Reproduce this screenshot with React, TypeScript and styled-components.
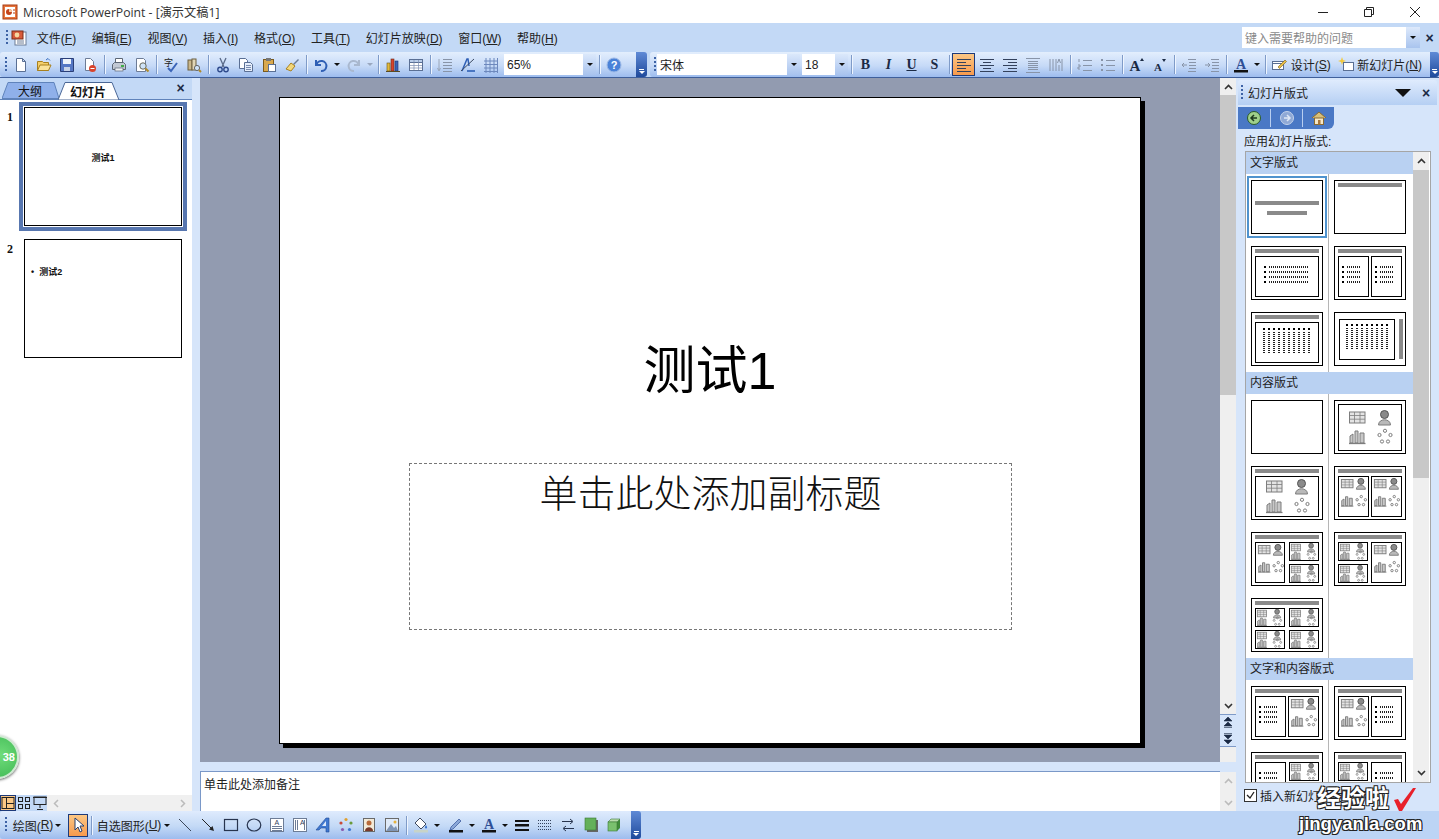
import React from "react";
import styled, { createGlobalStyle } from "styled-components";

const UI_FONT = `"Liberation Sans", "Noto Sans CJK SC", sans-serif`;

const GlobalStyle = createGlobalStyle`
  html, body { margin: 0; padding: 0; height: 100%; overflow: hidden; background: #c3d9f6; }
  * { box-sizing: border-box; }
  #root { height: 100%; }
`;

const Window = styled.div`
  position: relative;
  width: 1439px;
  height: 839px;
  display: flex;
  flex-direction: column;
  overflow: hidden;
  font: 12px ${UI_FONT};
  color: #111;
`;

const TitleBar = styled.div`
  height: 23px;
  flex: none;
  background: #fff;
  display: flex;
  align-items: center;
  padding-left: 2px;
  font: 12.2px "Open Sans", "Noto Sans CJK SC", sans-serif;
  color: #333;
`;
const TitleText = styled.span`
  margin-left: 5px;
`;
const WindowButtons = styled.div`
  margin-left: auto;
  margin-right: 1px;
  display: flex;
`;
const WindowButton = styled.div`
  width: 45px;
  height: 23px;
  display: flex;
  align-items: center;
  justify-content: center;
  margin-right: 1px;
`;

const MenuBar = styled.div`
  height: 29px;
  flex: none;
  background: #c3d9f6;
  display: flex;
  align-items: center;
  padding-left: 6px;
`;
const DocGrip = styled.div`
  width: 2px;
  height: 16px;
  flex: none;
  background: repeating-linear-gradient(to bottom, #3d62a5 0 2px, transparent 2px 4px);
`;
const MenuIcon = styled.div`
  width: 21px;
  display: flex;
  justify-content: center;
`;
const MenuItem = styled.span`
  padding: 0 7.8px;
  white-space: nowrap;
  color: #222;
`;
const HelpBox = styled.div`
  margin-left: auto;
  width: 178px;
  height: 21px;
  background: #fff;
  display: flex;
  align-items: center;
  padding-left: 3px;
  color: #8a8a8a;
`;
const HelpArrow = styled.div`
  margin-left: auto;
  width: 14px;
  height: 100%;
  background: linear-gradient(#dde9fb, #a9c4ee);
  display: flex;
  align-items: center;
  justify-content: center;
`;
const CloseGlyph = styled.span<{ $w?: number }>`
  width: ${(p) => p.$w ?? 19}px;
  text-align: center;
  font: bold 14px "Liberation Sans", sans-serif;
  color: #1b2a44;
`;

const ToolRow = styled.div`
  height: 26px;
  flex: none;
  display: flex;
  background: #c3d9f6;
  border-bottom: 1px solid #3f5f9a;
`;
const Strip = styled.div<{ $w: number; $pad?: number }>`
  width: ${(p) => p.$w}px;
  flex: none;
  height: 25px;
  display: flex;
  align-items: center;
  padding-left: ${(p) => p.$pad ?? 5}px;
  background: linear-gradient(#e3eefd, #c6daf7 55%, #9dbcee);
  border-radius: 3px 0 0 3px;
`;
const GripSlot = styled.div<{ $w?: number }>`
  width: ${(p) => p.$w ?? 5}px;
  flex: none;
`;
const Btn = styled.div<{ $w?: number; $active?: boolean }>`
  width: ${(p) => p.$w ?? 23}px;
  height: 23px;
  flex: none;
  display: flex;
  align-items: center;
  justify-content: center;
  white-space: nowrap;
  color: #222;
  ${(p) =>
    p.$active &&
    `background: linear-gradient(#fbc785, #f79a4d); border: 1px solid #1d3a7a;`}
`;
const FmtLetter = styled.span<{ $italic?: boolean; $under?: boolean }>`
  font: bold 14px "Liberation Serif", serif;
  font-style: ${(p) => (p.$italic ? "italic" : "normal")};
  text-decoration: ${(p) => (p.$under ? "underline" : "none")};
  color: #1b2a44;
`;
const Sep = styled.div`
  width: 6px;
  height: 19px;
  flex: none;
  display: flex;
  justify-content: center;
  &::before {
    content: "";
    width: 1px;
    background: #7f9bc8;
    box-shadow: 1px 0 0 #eef5ff;
  }
`;
const Mini = styled.span<{ $color?: string }>`
  width: 0;
  height: 0;
  border-left: 3px solid transparent;
  border-right: 3px solid transparent;
  border-top: 3px solid ${(p) => p.$color ?? "#111"};
`;
const ArrowBtn = styled.div`
  width: 10px;
  height: 23px;
  flex: none;
  display: flex;
  align-items: center;
  justify-content: center;
`;
const Combo = styled.div<{ $w: number; $ml?: number }>`
  width: ${(p) => p.$w}px;
  margin-left: ${(p) => p.$ml ?? 0}px;
  height: 21px;
  flex: none;
  background: #fff;
  display: flex;
  align-items: center;
  padding-left: 3px;
  color: #222;
`;
const ComboArrow = styled.div`
  margin-left: auto;
  width: 13px;
  height: 100%;
  background: linear-gradient(#dbe8fb, #a8c3ee);
  display: flex;
  align-items: center;
  justify-content: center;
`;
const Overflow = styled.div<{ $w?: number }>`
  width: ${(p) => p.$w ?? 11}px;
  height: 25px;
  flex: none;
  background: linear-gradient(#5f8ad6, #1f4a9c);
  border-radius: 0 3px 3px 0;
  display: flex;
  flex-direction: column;
  align-items: center;
  justify-content: flex-end;
  padding-bottom: 3px;
  gap: 1px;
  &::before {
    content: "";
    width: 5px;
    height: 1px;
    background: #fff;
  }
  &::after {
    content: "";
    width: 0;
    height: 0;
    border-left: 3px solid transparent;
    border-right: 3px solid transparent;
    border-top: 3px solid #fff;
  }
`;
const ToolGap = styled.div<{ $w: number }>`
  width: ${(p) => p.$w}px;
  flex: none;
`;

const Workspace = styled.div`
  height: 733px;
  flex: none;
  display: flex;
  background: #d6e5fa;
`;

const LeftPanel = styled.div`
  width: 192px;
  flex: none;
  display: flex;
  flex-direction: column;
  background: #fff;
`;
const TabStrip = styled.div`
  height: 22px;
  flex: none;
  display: flex;
  align-items: flex-end;
  padding-left: 2px;
  background: #c3d9f6;
  border-bottom: 1px solid #5f83bb;
  position: relative;
`;
const Tab = styled.div<{ $w: number; $active?: boolean }>`
  position: relative;
  width: ${(p) => p.$w}px;
  height: ${(p) => (p.$active ? 18 : 17)}px;
  margin-bottom: ${(p) => (p.$active ? -1 : 0)}px;
  display: flex;
  align-items: center;
  justify-content: center;
  font-weight: ${(p) => (p.$active ? "bold" : "normal")};
  z-index: ${(p) => (p.$active ? 1 : 0)};
  & > span {
    position: relative;
  }
  & > svg {
    position: absolute;
    inset: 0;
  }
`;
const TabClose = styled(CloseGlyph)`
  position: absolute;
  right: 2px;
  top: 2px;
`;
const ThumbList = styled.div`
  flex: 1;
  padding: 2px 0 0 7px;
  display: flex;
  flex-direction: column;
  gap: 3px;
`;
const ThumbRow = styled.div`
  display: flex;
`;
const ThumbNumber = styled.div`
  width: 12px;
  padding-top: 8px;
  font: bold 12px "Liberation Serif", serif;
`;
const ThumbFrame = styled.div<{ $selected?: boolean }>`
  width: 168px;
  height: 129px;
  padding: 1px;
  border: 4px solid ${(p) => (p.$selected ? "#5877b0" : "transparent")};
`;
const Thumb = styled.div<{ $bullet?: boolean }>`
  width: 158px;
  height: 119px;
  border: 1px solid #000;
  background: #fff;
  display: flex;
  font-size: 9px;
  font-weight: bold;
  ${(p) =>
    p.$bullet
      ? `padding: 25px 0 0 6px;`
      : `align-items: flex-start; justify-content: center; padding-top: 43px;`}
`;
const ViewBar = styled.div`
  height: 16px;
  flex: none;
  display: flex;
  background: #f0f0f0;
`;
const ViewButtons = styled.div`
  width: 47px;
  display: flex;
  background: #c3d9f6;
`;
const ViewButton = styled.div<{ $active?: boolean }>`
  width: 16px;
  height: 16px;
  display: flex;
  align-items: center;
  justify-content: center;
  ${(p) => p.$active && `background: #fbc785; outline: 1px solid #1d3a7a; outline-offset: -1px;`}
`;
const HScroll = styled.div`
  flex: 1;
  display: flex;
  align-items: center;
  justify-content: space-between;
  padding: 0 6px 0 6px;
`;

const Splitter = styled.div`
  width: 8px;
  flex: none;
  background: #d6e5fa;
`;

const CenterColumn = styled.div`
  width: 1036px;
  flex: none;
  display: flex;
  flex-direction: column;
`;
const TopRow = styled.div`
  height: 684px;
  flex: none;
  display: flex;
`;
const Canvas = styled.div`
  width: 1020px;
  flex: none;
  background: #929bb0;
  padding: 19px 0 0 79px;
`;
const Slide = styled.div`
  width: 862px;
  height: 647px;
  background: #fff;
  border: 1px solid #000;
  box-shadow: 4px 4px 0 #000;
  padding-top: 243px;
`;
const SlideTitle = styled.div`
  height: 60px;
  line-height: 60px;
  text-align: center;
  font-size: 52px;
  color: #000;
`;
const SubtitleBox = styled.div`
  margin: 62px 0 0 129px;
  width: 603px;
  height: 167px;
  border: 1px dashed #777;
  padding-top: 2px;
  text-align: center;
  font-size: 38px;
  line-height: 56px;
  color: #111;
  font-weight: 300;
`;
const VScroll = styled.div`
  width: 16px;
  flex: none;
  display: flex;
  flex-direction: column;
  background: #efefef;
`;
const ScrollBtn = styled.div<{ $h?: number }>`
  height: ${(p) => p.$h ?? 17}px;
  flex: none;
  display: flex;
  align-items: center;
  justify-content: center;
`;
const ScrollThumb = styled.div<{ $h: number }>`
  height: ${(p) => p.$h}px;
  flex: none;
  background: #c8c8c8;
`;
const ScrollFill = styled.div`
  flex: 1;
`;
const PageButtons = styled.div`
  height: 33px;
  flex: none;
  margin-bottom: 15px;
  border-top: 1px solid #7f9bc8;
  border-bottom: 1px solid #7f9bc8;
  display: flex;
  flex-direction: column;
  align-items: center;
  justify-content: space-around;
  background: #d6e5fa;
`;
const Strip9 = styled.div`
  height: 9px;
  flex: none;
`;
const NotesRow = styled.div`
  flex: 1;
  display: flex;
`;
const Notes = styled.div`
  width: 1020px;
  flex: none;
  background: #fff;
  border-top: 1px solid #7a98c8;
  border-left: 1px solid #7a98c8;
  padding: 3px 3px;
  color: #222;
`;
const NotesScroll = styled(VScroll)`
  justify-content: space-between;
  border-top: 1px solid #d6e5fa;
`;

const TaskPane = styled.div`
  width: 203px;
  flex: none;
  padding: 2px 2px 0;
  display: flex;
  flex-direction: column;
`;
const PaneHead = styled.div`
  height: 25px;
  flex: none;
  display: flex;
  align-items: center;
  padding-left: 3px;
  background: linear-gradient(#dfebfd, #b5cff3);
  border-radius: 3px 3px 0 0;
  color: #222;
`;
const PaneTitle = styled.span`
  margin-left: 5px;
`;
const PaneMenu = styled.span`
  margin-left: auto;
  width: 0;
  height: 0;
  border-left: 8px solid transparent;
  border-right: 8px solid transparent;
  border-top: 8px solid #111;
  margin-right: 4px;
`;
const PaneNav = styled.div`
  width: 96px;
  height: 22px;
  margin-top: 2px;
  flex: none;
  background: #4a78c5;
  border-radius: 0 0 6px 0;
  display: flex;
  align-items: center;
`;
const NavItem = styled.div`
  width: 32px;
  height: 18px;
  display: flex;
  align-items: center;
  justify-content: center;
  & + & {
    border-left: 1px solid #b8cef0;
  }
`;
const PaneLabel = styled.div`
  margin: 5px 0 0 6px;
  height: 17px;
  line-height: 17px;
  color: #222;
`;
const ListBox = styled.div`
  margin: 0 0 0 7px;
  width: 186px;
  height: 632px;
  flex: none;
  display: flex;
  border: 1px solid #a5a5a5;
  background: #fff;
`;
const ListContent = styled.div`
  width: 167px;
  flex: none;
  overflow: hidden;
`;
const SectionHead = styled.div`
  height: 22px;
  line-height: 22px;
  padding-left: 4px;
  background: #b9d1f2;
  color: #222;
`;
const LayoutGrid = styled.div`
  display: grid;
  grid-template-columns: 83px 83px;
  row-gap: 12px;
  padding: 6px 0;
  background: linear-gradient(#b5b5b5, #b5b5b5) 82px 0 / 1px 100% no-repeat;
`;
const LayoutCell = styled.div<{ $selected?: boolean }>`
  width: 72px;
  height: 54px;
  margin-left: 5px;
  ${(p) => p.$selected && `outline: 2px solid #4f93ce; outline-offset: 2px;`}
  & > svg {
    display: block;
  }
`;
const PaneFoot = styled.div`
  height: 27px;
  display: flex;
  align-items: center;
  padding: 0 0 3px 6px;
  gap: 3px;
  color: #222;
  white-space: nowrap;
`;
const CheckBox = styled.div`
  width: 13px;
  height: 13px;
  border: 1px solid #333;
  background: #fff;
  display: flex;
  align-items: center;
  justify-content: center;
`;

const DrawBar = styled.div`
  flex: 1;
  display: flex;
  background: #bcd4f5;
`;
const DrawStrip = styled(Strip)`
  height: 28px;
  background: linear-gradient(#dfebfd, #c3d9f6 55%, #9dbcee);
`;
const DrawOverflow = styled(Overflow)`
  height: 28px;
`;

const Badge = styled.div`
  position: absolute;
  left: -25px;
  top: 735px;
  width: 44px;
  height: 44px;
  border-radius: 50%;
  background: radial-gradient(circle at 60% 45%, #6fdc7a, #37b24d);
  border: 2px solid #cfe9d2;
  box-shadow: 0 1px 3px #555;
  color: #fff;
  font-size: 11px;
  font-weight: bold;
  line-height: 40px;
  text-align: right;
  padding-right: 2px;
`;
const Watermark = styled.div`
  position: absolute;
  left: 1299px;
  top: 786px;
  width: 130px;
  pointer-events: none;
  font-weight: bold;
  color: #fff;
  text-shadow: 1px 1px 0 #222, -1px -1px 0 #222, 1px -1px 0 #222, -1px 1px 0 #222;
`;
const MarkTop = styled.div`
  font-size: 24px;
  line-height: 26px;
  padding-left: 18px;
  display: flex;
  align-items: center;
  gap: 3px;
`;
const MarkBottom = styled.div`
  font-size: 18.5px;
  line-height: 24px;
`;

/* ---------- icons ---------- */

const S = ({ children, size = 16 }: { children: React.ReactNode; size?: number }) => (
  <svg width={size} height={size} viewBox="0 0 16 16">
    {children}
  </svg>
);

const lines = (ys: number[], x1: number, x2: number, c = "#33415c") =>
  ys.map((y) => <path key={y} d={`M${x1} ${y + 0.5}H${x2}`} stroke={c} />);

const ICONS: Record<string, React.ReactNode> = {
  pp: (
    <>
      <rect x="1" y="1" width="14" height="14" fill="#e8743b" stroke="#a83c14" />
      <rect x="3" y="3" width="10" height="10" fill="#fff" />
      <circle cx="7" cy="8" r="3" fill="#c4441c" />
      <path d="M7 8V5a3 3 0 0 1 3 3z" fill="#f7c8a0" />
      <path d="M11 6h2M11 9h2" stroke="#a83c14" />
    </>
  ),
  docmenu: (
    <>
      <rect x="4" y="2" width="11" height="13" fill="#fff" stroke="#6d7c96" />
      <rect x="1" y="1" width="11" height="8" fill="#d75a3a" stroke="#7c2c18" />
      <circle cx="6" cy="5" r="2.4" fill="#f7d7a0" />
      <path d="M6 11h7M6 13h7" stroke="#6d7c96" />
    </>
  ),
  newdoc: <path d="M3.5 1.5h6l3 3v10h-9z M9.5 1.5v3h3" fill="#fff" stroke="#5a6f94" />,
  open: (
    <>
      <path d="M1.5 13.5v-9h5l1 1h5v8z" fill="#f5cf6a" stroke="#a8801f" />
      <path d="M1.5 13.5l2.5-5.5h11l-2.5 5.5z" fill="#fbe39a" stroke="#a8801f" />
      <path d="M10 3l2-1.5 2 2" fill="none" stroke="#3a6fc0" />
    </>
  ),
  save: (
    <>
      <path d="M1.5 1.5h13v13h-13z" fill="#5577c4" stroke="#2b3f78" />
      <rect x="4" y="2" width="8" height="5" fill="#eef3fb" />
      <rect x="5" y="10" width="6" height="4" fill="#c8d3e8" />
    </>
  ),
  perm: (
    <>
      <path d="M3.5 1.5h5l3 3v9h-8z" fill="#fff" stroke="#6d7c96" />
      <circle cx="10.5" cy="11.5" r="3.5" fill="#d8432c" />
      <path d="M8.5 11.5h4" stroke="#fff" />
    </>
  ),
  print: (
    <>
      <path d="M4.5 1.5h7v5h-7z" fill="#fff" stroke="#5c6675" />
      <path d="M1.5 7.5l2-2h9l2 2v5h-13z" fill="#c2c9d4" stroke="#5c6675" />
      <rect x="4" y="11" width="8" height="3" fill="#eef1f5" stroke="#5c6675" strokeWidth=".7" />
      <rect x="10" y="8" width="3" height="2" fill="#3fae4a" />
    </>
  ),
  preview: (
    <>
      <path d="M2.5 1.5h7l2 2v11h-9z" fill="#fff" stroke="#6d7c96" />
      <circle cx="9" cy="9" r="3.2" fill="#cfe3f7" stroke="#6a6a5a" />
      <path d="M11.5 11.5l3 3" stroke="#b08a2a" strokeWidth="2" />
    </>
  ),
  spell: (
    <>
      <text x="1" y="9" fontSize="9" fontFamily="Noto Sans CJK SC" fill="#222">字</text>
      <path d="M5 11l3 3 6-8" fill="none" stroke="#3a64b8" strokeWidth="2" />
    </>
  ),
  research: (
    <>
      <rect x="2" y="3" width="4" height="10" fill="#c9b68a" stroke="#6d5f3e" />
      <rect x="6" y="2" width="4" height="11" fill="#e0d5b5" stroke="#6d5f3e" />
      <circle cx="11" cy="11" r="2.6" fill="#cfe3f7" stroke="#666" />
      <path d="M13 13l2 2" stroke="#b08a2a" strokeWidth="2" />
    </>
  ),
  cut: (
    <>
      <path d="M5 1l4 9M11 1L7 10" stroke="#5a6a88" strokeWidth="1.3" />
      <circle cx="5" cy="12.5" r="2.2" fill="none" stroke="#2e4a8c" strokeWidth="1.4" />
      <circle cx="11" cy="12.5" r="2.2" fill="none" stroke="#2e4a8c" strokeWidth="1.4" />
    </>
  ),
  copy: (
    <>
      <path d="M1.5 1.5h6l2 2v8h-8z" fill="#fff" stroke="#5a6f94" />
      <path d="M6.5 5.5h6l2 2v7h-8z" fill="#e6eefb" stroke="#5a6f94" />
      {lines([8, 10, 12], 8, 13, "#7b8db0")}
    </>
  ),
  paste: (
    <>
      <rect x="2.5" y="2.5" width="10" height="12" fill="#d9a94f" stroke="#7a5a1c" />
      <rect x="5" y="1" width="5" height="3" fill="#777" />
      <rect x="7.5" y="7.5" width="7" height="7" fill="#fff" stroke="#5a6f94" />
    </>
  ),
  painter: (
    <>
      <path d="M9 7l5-5 1 1-5 5z" fill="#6d7c96" />
      <path d="M2 12l5-6 4 3-4 5z" fill="#f3d77a" stroke="#a8801f" />
    </>
  ),
  undo: <path d="M3 3v5h5M3.5 8A5 5 0 1 1 8 14" fill="none" stroke="#2f5fb5" strokeWidth="2" />,
  redo: <path d="M13 3v5H8M12.5 8A5 5 0 1 0 8 14" fill="none" stroke="#a9b8cf" strokeWidth="2" />,
  chart: (
    <>
      <rect x="2" y="6" width="3" height="8" fill="#e2b93b" stroke="#6a5518" strokeWidth=".6" />
      <rect x="6" y="2" width="3" height="12" fill="#d8432c" stroke="#6a2a18" strokeWidth=".6" />
      <rect x="10" y="4" width="3" height="10" fill="#3a64b8" stroke="#1e3470" strokeWidth=".6" />
      <path d="M1 14.5h14" stroke="#5a4a20" />
    </>
  ),
  table: (
    <>
      <rect x="1.5" y="2.5" width="13" height="11" fill="#fff" stroke="#5a6f94" />
      <rect x="1.5" y="2.5" width="13" height="3" fill="#b9cdea" stroke="#5a6f94" />
      <path d="M6 3v10M10.5 3v10M2 8.5h12M2 11h12" stroke="#7b8db0" strokeWidth=".7" />
    </>
  ),
  expand: (
    <>
      <path d="M2 2v11M0.5 11L2 14l1.5-3" fill="none" stroke="#9aa6b8" />
      {lines([2, 5, 8, 11, 14], 6, 15, "#8894a8")}
    </>
  ),
  format: (
    <>
      <path d="M2 14L7 2h1l1 7" fill="none" stroke="#2f5fb5" strokeWidth="1.5" />
      <path d="M1 14L14 2" stroke="#3c4a62" />
      <path d="M7 14h8" stroke="#2f5fb5" strokeWidth="1.6" />
    </>
  ),
  grid: <path d="M1 4h14M1 7.5h14M1 11h14M1 14.5h14M3 1v15M7 1v15M11 1v15M14.5 1v15" stroke="#6d88bd" fill="none" />,
  help: (
    <>
      <circle cx="8" cy="8" r="7" fill="#4a82d8" stroke="#9db9e6" />
      <text x="8" y="12" fontSize="11" fontWeight="bold" textAnchor="middle" fill="#fff" fontFamily="Liberation Sans">?</text>
    </>
  ),
  alignL: <>{lines([2, 8, 14], 1, 15)}{lines([5, 11], 1, 10)}</>,
  alignC: <>{lines([2, 8, 14], 1, 15)}{lines([5, 11], 4, 12)}</>,
  alignR: <>{lines([2, 8, 14], 1, 15)}{lines([5, 11], 6, 15)}</>,
  justify: (
    <>
      {lines([1, 15], 1, 15, "#8894a8")}
      {lines([4, 6, 8, 10, 12], 3, 13, "#8894a8")}
    </>
  ),
  distribute: (
    <>
      <path d="M2 2v12M5 2v12M8 2v12M14 2v12M11 8v6" stroke="#8894a8" />
      <path d="M9.5 6l1.5-4 1.5 4" fill="none" stroke="#8894a8" />
    </>
  ),
  number: (
    <>
      <path d="M2 2v3M1 8h2v2H1v2h2" fill="none" stroke="#8894a8" />
      {lines([3, 8, 13], 6, 15, "#8894a8")}
    </>
  ),
  bullets: (
    <>
      <path d="M2 2v2M2 7v2M2 12v2" stroke="#8894a8" strokeWidth="2" />
      {lines([3, 8, 13], 6, 15, "#8894a8")}
    </>
  ),
  growFont: (
    <>
      <text x="6" y="14" fontSize="15" fontWeight="bold" textAnchor="middle" fontFamily="Liberation Serif" fill="#1b2a44">A</text>
      <path d="M11 4l2-3 2 3z" fill="#1b2a44" />
    </>
  ),
  shrinkFont: (
    <>
      <text x="6" y="14" fontSize="11" fontWeight="bold" textAnchor="middle" fontFamily="Liberation Serif" fill="#1b2a44">A</text>
      <path d="M10 2h4l-2 3z" fill="#1b2a44" />
    </>
  ),
  outdent: (
    <>
      {lines([2, 14], 7, 15, "#8894a8")}
      {lines([5, 8, 11], 8, 15, "#8894a8")}
      <path d="M1 8h5M3 6L1 8l2 2" fill="none" stroke="#8894a8" />
    </>
  ),
  indent: (
    <>
      {lines([2, 14], 7, 15, "#8894a8")}
      {lines([5, 8, 11], 8, 15, "#8894a8")}
      <path d="M1 8h5M4 6l2 2-2 2" fill="none" stroke="#8894a8" />
    </>
  ),
  fontColor: (
    <>
      <text x="8" y="11.5" fontSize="14" fontWeight="bold" textAnchor="middle" fontFamily="Liberation Serif" fill="#2f4f96">A</text>
      <rect x="1" y="13" width="14" height="2.5" fill="#111" />
    </>
  ),
  design: (
    <>
      <rect x="1.5" y="4.5" width="11" height="8" fill="#fff" stroke="#5a6f94" />
      <path d="M2 6.5h10" stroke="#5a6f94" />
      <path d="M7 10l7-7 1.5 1.5-7 7z" fill="#e8c048" stroke="#7a5a1c" strokeWidth=".6" />
    </>
  ),
  newslide: (
    <>
      <rect x="5.5" y="5.5" width="10" height="8" fill="#fff" stroke="#5a6f94" />
      <path d="M4 0l1 3 3 1-3 1-1 3-1-3-3-1 3-1z" fill="#f3c93c" />
    </>
  ),
  cursor: <path d="M5 1v12l3-3 2 5 2-1-2-5h4z" fill="#fff" stroke="#27406f" />,
  line: <path d="M2 2l12 12" stroke="#3a465a" />,
  arrowLine: (
    <>
      <path d="M2 2l9 9" stroke="#222" />
      <path d="M14 14l-5-1.5 3.5-3.5z" fill="#222" />
    </>
  ),
  rect: <rect x="1.5" y="2.5" width="13" height="11" fill="none" stroke="#27344e" strokeWidth="1.2" />,
  ellipse: <ellipse cx="8" cy="8" rx="6.8" ry="6" fill="none" stroke="#27344e" strokeWidth="1.2" />,
  textbox: (
    <>
      <rect x="1.5" y="1.5" width="13" height="13" fill="#fff" stroke="#6d7c96" />
      <text x="5.5" y="8" fontSize="7" fontFamily="Liberation Sans" fill="#33415c">A</text>
      {lines([9, 11, 13], 3, 13, "#6d7c96")}
    </>
  ),
  vtextbox: (
    <>
      <rect x="1.5" y="1.5" width="13" height="13" fill="#fff" stroke="#6d7c96" />
      <text x="8" y="8" fontSize="7" fontFamily="Liberation Sans" fill="#33415c">A</text>
      <path d="M3.5 3v10M5.5 3v10M12.5 3v10" stroke="#6d7c96" />
    </>
  ),
  wordart: (
    <>
      <path d="M1 13L11 1h3v14h-3v-4H6l-2 2z" fill="#3f78d0" stroke="#244a94" strokeWidth=".6" />
      <path d="M7 9l4-5v5z" fill="#dce8fa" />
    </>
  ),
  diagram: (
    <>
      <circle cx="8" cy="2.5" r="1.6" fill="#e0a030" />
      <circle cx="13" cy="6" r="1.6" fill="#6a9a3a" />
      <circle cx="11.5" cy="12.5" r="1.6" fill="#3f78d0" />
      <circle cx="4.5" cy="12.5" r="1.6" fill="#8a5ab0" />
      <circle cx="3" cy="6" r="1.6" fill="#c84a3a" />
    </>
  ),
  clipart: (
    <>
      <rect x="2.5" y="1.5" width="11" height="13" fill="#f2ead8" stroke="#6a6a6a" />
      <circle cx="8" cy="6" r="2.5" fill="#b86a3a" />
      <path d="M4 14c0-5 8-5 8 0z" fill="#7a3a2a" />
    </>
  ),
  picture: (
    <>
      <rect x="1.5" y="1.5" width="13" height="13" fill="#dfeaf8" stroke="#6a6a6a" />
      <path d="M2 14l5-7 3 4 2-2 2 5z" fill="#7f95b5" />
      <circle cx="11" cy="5" r="1.5" fill="#e6b23a" />
    </>
  ),
  fill: (
    <>
      <path d="M7 1l6 6-5 5-6-6z" fill="#fff" stroke="#3f4a60" />
      <path d="M13 8c1.5 2 1.5 3.5 0 3.5s-1.5-1.5 0-3.5z" fill="#3f78d0" />
      <rect x="1" y="13" width="14" height="2.5" fill="#c8d4c8" />
    </>
  ),
  lineColor: (
    <>
      <path d="M3 10L11 2l2 2-8 8-3 1z" fill="#8aa8d8" stroke="#2f4f96" strokeWidth=".7" />
      <rect x="1" y="13" width="14" height="2.5" fill="#111" />
    </>
  ),
  lineStyle: (
    <>
      <rect x="1" y="3" width="14" height="2" fill="#111" />
      <rect x="1" y="7" width="14" height="2.5" fill="#111" />
      <rect x="1" y="12" width="14" height="2" fill="#111" />
    </>
  ),
  dash: <path d="M1 3.5h14M1 6.5h14M1 9.5h14M1 12.5h14" stroke="#33415c" strokeDasharray="1 1" />,
  arrows: <path d="M2 4.5h10M10 2l3 2.5L10 7M14 11.500H4M6 9l-3 2.500L6 14" fill="none" stroke="#27344e" />,
  shadow: (
    <>
      <rect x="4" y="3" width="11" height="12" fill="#666" />
      <rect x="2" y="1" width="11" height="12" fill="#64b05a" stroke="#3a7a34" strokeWidth=".6" />
    </>
  ),
  threeD: (
    <>
      <path d="M2 5l3-3h9l-3 3z" fill="#b9dcae" stroke="#3a7a34" strokeWidth=".6" />
      <path d="M11 5l3-3v9l-3 3z" fill="#3f8a3a" />
      <rect x="2" y="5" width="9" height="9" fill="#7ac06e" stroke="#3a7a34" strokeWidth=".6" />
    </>
  ),
  navBack: (
    <>
      <circle cx="8" cy="8" r="6.5" fill="#9fd08a" stroke="#2a5a2a" />
      <path d="M11 8H6M8 5L5 8l3 3" fill="none" stroke="#1f3a1f" strokeWidth="1.5" />
    </>
  ),
  navForward: (
    <>
      <circle cx="8" cy="8" r="6.5" fill="#8fa9d6" stroke="#c4d3ec" />
      <path d="M5 8h5M8 5l3 3-3 3" fill="none" stroke="#dfe8f6" strokeWidth="1.5" />
    </>
  ),
  navHome: (
    <>
      <path d="M1 8l7-6 7 6" fill="#d8c07a" stroke="#8a6a30" />
      <rect x="3.5" y="8" width="9" height="6.5" fill="#f6e8c8" stroke="#8a6a30" />
      <rect x="7" y="10" width="2.5" height="4.5" fill="#a8763a" />
    </>
  ),
  viewNormal: (
    <>
      <rect x="2" y="2.5" width="12" height="11" fill="none" stroke="#222" />
      <path d="M6.5 3v10M7 8.5h7" stroke="#222" />
    </>
  ),
  viewSorter: (
    <>
      <rect x="2.5" y="2.5" width="4" height="4" fill="none" stroke="#222" />
      <rect x="9.5" y="2.5" width="4" height="4" fill="none" stroke="#222" />
      <rect x="2.5" y="9.5" width="4" height="4" fill="none" stroke="#222" />
      <rect x="9.5" y="9.5" width="4" height="4" fill="none" stroke="#222" />
    </>
  ),
  viewShow: (
    <>
      <rect x="2" y="2" width="12" height="7.5" fill="none" stroke="#222" />
      <path d="M1 2.5h14M8 10v3M5 14.5h6" stroke="#222" />
    </>
  ),
};

const Icon = ({ name }: { name: string }) => <S>{ICONS[name]}</S>;

const Tool = ({ name, w, active }: { name: string; w?: number; active?: boolean }) => (
  <Btn $w={w} $active={active}>
    <Icon name={name} />
  </Btn>
);

const Chevron = ({ up, color = "#333" }: { up?: boolean; color?: string }) => (
  <svg width="9" height="6" viewBox="0 0 9 6">
    <path d={up ? "M1 5l3.5-3.5L8 5" : "M1 1l3.5 3.5L8 1"} fill="none" stroke={color} strokeWidth="1.6" />
  </svg>
);

const DoubleChevron = ({ up }: { up?: boolean }) => (
  <svg width="10" height="11" viewBox="0 0 10 11">
    {up ? (
      <path d="M5 0l4 4H1zM5 5l4 4H1zM1 10.5h8" fill="#1b2a44" stroke="#1b2a44" strokeWidth=".6" />
    ) : (
      <path d="M1 .5h8M5 6L1 2h8zM5 11L1 7h8z" fill="#1b2a44" stroke="#1b2a44" strokeWidth=".6" />
    )}
  </svg>
);

/* ---------- layout thumbnails ---------- */

const Bar = ({ x, y, w, h = 4 }: { x: number; y: number; w: number; h?: number }) => (
  <rect x={x} y={y} width={w} height={h} fill="#8a8a8a" />
);
const Frame = ({ x, y, w, h }: { x: number; y: number; w: number; h: number }) => (
  <rect x={x + 0.5} y={y + 0.5} width={w} height={h} fill="#fff" stroke="#000" />
);

// bulleted text lines inside a frame
const TextLines = ({ x, y, w }: { x: number; y: number; w: number }) => (
  <>
    {[0, 5, 10, 15].map((d) => (
      <g key={d}>
        <rect x={x} y={y + d} width="2" height="2" fill="#000" />
        <path
          d={`M${x + 5} ${y + d + 1}H${x + 5 + w}`}
          stroke="#222"
          strokeWidth="2"
          strokeDasharray="1 1"
        />
      </g>
    ))}
  </>
);

const VerticalLines = ({ x, y, n, h }: { x: number; y: number; n: number; h: number }) => (
  <>
    {Array.from({ length: n }, (_, i) => (
      <g key={i}>
        <rect x={x + i * 5} y={y} width="2" height="2" fill="#000" />
        <path
          d={`M${x + i * 5 + 1} ${y + 4}V${y + 4 + h}`}
          stroke="#222"
          strokeWidth="2"
          strokeDasharray="1 1"
        />
      </g>
    ))}
  </>
);

// the four gray content placeholders: table, person, chart, diagram
const Content = ({ x, y, s = 1, dx = 29, dy = 21 }: { x: number; y: number; s?: number; dx?: number; dy?: number }) => (
  <g transform={`translate(${x} ${y}) scale(${s})`} fill="none" stroke="#7d7d7d" strokeWidth={1 / Math.max(s, 0.8)}>
    <rect x=".5" y="2" width="15.500" height="11" fill="#e4e4e4" />
    <path d="M5.500 2v11M11 2v11M1 5.500h15M1 9.200h15" strokeWidth=".8" />
    <g transform={`translate(${dx} 0)`}>
      <circle cx="6.500" cy="4.500" r="4" fill="#8a8a8a" stroke="#555" />
      <path d="M.5 15c0-7 12-7 12 0z" fill="#b9b9b9" />
    </g>
    <g transform={`translate(0 ${dy})`}>
      <path d="M1 12V5l3-2v9zM6 12V0h3v12zM11 12V2h4v10z" fill="#c8c8c8" />
      <path d="M0 12.500h16.500" strokeWidth="1.300" />
    </g>
    <g transform={`translate(${dx} ${dy - 2})`}>
      <circle cx="7" cy="1.800" r="1.600" />
      <circle cx="12.500" cy="6" r="1.600" />
      <circle cx="10" cy="12.500" r="1.600" />
      <circle cx="4" cy="12.500" r="1.600" />
      <circle cx="1.500" cy="6" r="1.600" />
    </g>
  </g>
);

const Medium = ({ x, y }: { x: number; y: number }) => <Content x={x} y={y} s={0.75} dx={20} dy={25} />;
const Small = ({ x, y }: { x: number; y: number }) => <Content x={x} y={y} s={0.6} dx={27} dy={15} />;

const frames: Record<string, React.ReactNode> = {
  title: (
    <>
      <Bar x={4} y={21} w={64} />
      <Bar x={16} y={31} w={40} />
    </>
  ),
  titleOnly: <Bar x={4} y={3} w={64} />,
  text: (
    <>
      <Bar x={4} y={3} w={64} />
      <Frame x={4} y={10} w={63} h={40} />
      <TextLines x={13} y={20} w={39} />
    </>
  ),
  twoText: (
    <>
      <Bar x={4} y={3} w={64} />
      <Frame x={4} y={10} w={30} h={40} />
      <Frame x={37} y={10} w={30} h={40} />
      <TextLines x={8} y={20} w={14} />
      <TextLines x={41} y={20} w={14} />
    </>
  ),
  vertical: (
    <>
      <Bar x={4} y={3} w={64} />
      <Frame x={4} y={10} w={63} h={40} />
      <VerticalLines x={12} y={16} n={10} h={22} />
    </>
  ),
  verticalSide: (
    <>
      <Frame x={5} y={7} w={55} h={40} />
      <Bar x={65} y={7} w={4} h={40} />
      <VerticalLines x={12} y={12} n={9} h={22} />
    </>
  ),
  blank: null,
  content: (
    <>
      <Frame x={4} y={4} w={63} h={46} />
      <Content x={15} y={10} />
    </>
  ),
  titleContent: (
    <>
      <Bar x={4} y={3} w={64} />
      <Frame x={4} y={10} w={63} h={40} />
      <Content x={15} y={13} />
    </>
  ),
  twoContent: (
    <>
      <Bar x={4} y={3} w={64} />
      <Frame x={4} y={10} w={30} h={40} />
      <Frame x={37} y={10} w={30} h={40} />
      <Medium x={7} y={12} />
      <Medium x={40} y={12} />
    </>
  ),
  contentAndTwo: (
    <>
      <Bar x={4} y={3} w={64} />
      <Frame x={4} y={10} w={29} h={40} />
      <Frame x={38} y={10} w={29} h={18} />
      <Frame x={38} y={32} w={29} h={18} />
      <Medium x={7} y={12} />
      <Small x={40} y={11} />
      <Small x={40} y={33} />
    </>
  ),
  twoAndContent: (
    <>
      <Bar x={4} y={3} w={64} />
      <Frame x={4} y={10} w={29} h={18} />
      <Frame x={4} y={32} w={29} h={18} />
      <Frame x={37} y={10} w={30} h={40} />
      <Small x={6} y={11} />
      <Small x={6} y={33} />
      <Medium x={40} y={12} />
    </>
  ),
  fourContent: (
    <>
      <Bar x={4} y={3} w={64} />
      <Frame x={4} y={10} w={29} h={18} />
      <Frame x={38} y={10} w={29} h={18} />
      <Frame x={4} y={32} w={29} h={18} />
      <Frame x={38} y={32} w={29} h={18} />
      <Small x={6} y={11} />
      <Small x={40} y={11} />
      <Small x={6} y={33} />
      <Small x={40} y={33} />
    </>
  ),
  textContent: (
    <>
      <Bar x={4} y={3} w={64} />
      <Frame x={4} y={10} w={30} h={40} />
      <Frame x={37} y={10} w={30} h={40} />
      <TextLines x={8} y={20} w={14} />
      <Medium x={40} y={12} />
    </>
  ),
  contentText: (
    <>
      <Bar x={4} y={3} w={64} />
      <Frame x={4} y={10} w={30} h={40} />
      <Frame x={37} y={10} w={30} h={40} />
      <Medium x={7} y={12} />
      <TextLines x={41} y={20} w={14} />
    </>
  ),
  textTwo: (
    <>
      <Bar x={4} y={3} w={64} />
      <Frame x={4} y={10} w={30} h={40} />
      <Frame x={38} y={10} w={29} h={18} />
      <Frame x={38} y={32} w={29} h={18} />
      <TextLines x={8} y={20} w={14} />
      <Small x={40} y={11} />
    </>
  ),
  twoText2: (
    <>
      <Bar x={4} y={3} w={64} />
      <Frame x={4} y={10} w={29} h={18} />
      <Frame x={4} y={32} w={29} h={18} />
      <Frame x={37} y={10} w={30} h={40} />
      <Small x={6} y={11} />
      <TextLines x={41} y={20} w={14} />
    </>
  ),
};

const LayoutThumb = ({ kind, selected }: { kind: string; selected?: boolean }) => (
  <LayoutCell $selected={selected}>
    <svg width="72" height="54" viewBox="0 0 72 54">
      <rect x=".5" y=".5" width="71" height="53" fill="#fff" stroke="#000" />
      {frames[kind]}
    </svg>
  </LayoutCell>
);

const sections = [
  { title: "文字版式", items: ["title", "titleOnly", "text", "twoText", "vertical", "verticalSide"] },
  {
    title: "内容版式",
    items: ["blank", "content", "titleContent", "twoContent", "contentAndTwo", "twoAndContent", "fourContent"],
  },
  { title: "文字和内容版式", items: ["textContent", "contentText", "textTwo", "twoText2"] },
];

const Menu = ({ label, k }: { label: string; k: string }) => (
  <MenuItem>
    {label}(<u>{k}</u>)
  </MenuItem>
);

export default function App() {
  return (
    <Window>
      <GlobalStyle />
      <TitleBar>
        <Icon name="pp" />
        <TitleText>Microsoft PowerPoint - [演示文稿1]</TitleText>
        <WindowButtons>
          <WindowButton>
            <svg width="12" height="12" viewBox="0 0 12 12">
              <path d="M1 6.500h10" stroke="#222" />
            </svg>
          </WindowButton>
          <WindowButton>
            <svg width="12" height="12" viewBox="0 0 12 12">
              <path d="M1.500 3.500h7v7h-7zM3.500 3V1.500h7v7H9" fill="none" stroke="#222" />
            </svg>
          </WindowButton>
          <WindowButton>
            <svg width="12" height="12" viewBox="0 0 12 12">
              <path d="M1 1l10 10M11 1L1 11" stroke="#222" />
            </svg>
          </WindowButton>
        </WindowButtons>
      </TitleBar>

      <MenuBar>
        <DocGrip />
        <MenuIcon>
          <Icon name="docmenu" />
        </MenuIcon>
        <Menu label="文件" k="F" />
        <Menu label="编辑" k="E" />
        <Menu label="视图" k="V" />
        <Menu label="插入" k="I" />
        <Menu label="格式" k="O" />
        <Menu label="工具" k="T" />
        <Menu label="幻灯片放映" k="D" />
        <Menu label="窗口" k="W" />
        <Menu label="帮助" k="H" />
        <HelpBox>
          键入需要帮助的问题
          <HelpArrow>
            <Mini />
          </HelpArrow>
        </HelpBox>
        <CloseGlyph>×</CloseGlyph>
      </MenuBar>

      <ToolRow>
        <Strip $w={636}>
          <DocGrip />
          <GripSlot $w={2} />
          <Tool name="newdoc" />
          <Tool name="open" />
          <Tool name="save" />
          <Tool name="perm" />
          <Sep />
          <Tool name="print" />
          <Tool name="preview" />
          <Sep />
          <Tool name="spell" />
          <Tool name="research" />
          <Sep />
          <Tool name="cut" />
          <Tool name="copy" />
          <Tool name="paste" />
          <Tool name="painter" />
          <Sep />
          <Tool name="undo" />
          <ArrowBtn>
            <Mini />
          </ArrowBtn>
          <Tool name="redo" />
          <ArrowBtn>
            <Mini $color="#9aa8c0" />
          </ArrowBtn>
          <Sep />
          <Tool name="chart" />
          <Tool name="table" />
          <Sep />
          <Tool name="expand" />
          <Tool name="format" />
          <Tool name="grid" />
          <Combo $w={92} $ml={2}>
            65%
            <ComboArrow>
              <Mini />
            </ComboArrow>
          </Combo>
          <Sep />
          <Tool name="help" />
        </Strip>
        <Overflow />
        <ToolGap $w={3} />
        <Strip $w={780} $pad={4}>
          <DocGrip />
          <GripSlot $w={1} />
          <Combo $w={143}>
            宋体
            <ComboArrow>
              <Mini />
            </ComboArrow>
          </Combo>
          <Combo $w={46} $ml={2}>
            18
            <ComboArrow>
              <Mini />
            </ComboArrow>
          </Combo>
          <Sep />
          <Btn><FmtLetter>B</FmtLetter></Btn>
          <Btn><FmtLetter $italic>I</FmtLetter></Btn>
          <Btn><FmtLetter $under>U</FmtLetter></Btn>
          <Btn><FmtLetter>S</FmtLetter></Btn>
          <Sep />
          <Tool name="alignL" active />
          <Tool name="alignC" />
          <Tool name="alignR" />
          <Tool name="justify" />
          <Tool name="distribute" />
          <Sep />
          <Tool name="number" />
          <Tool name="bullets" />
          <Sep />
          <Tool name="growFont" />
          <Tool name="shrinkFont" />
          <Sep />
          <Tool name="outdent" />
          <Tool name="indent" />
          <Sep />
          <Tool name="fontColor" />
          <ArrowBtn>
            <Mini />
          </ArrowBtn>
          <Sep />
          <Btn $w={66}>
            <Icon name="design" />
            &nbsp;设计(<u>S</u>)
          </Btn>
          <Btn $w={92}>
            <Icon name="newslide" />
            &nbsp;新幻灯片(<u>N</u>)
          </Btn>
        </Strip>
        <Overflow $w={9} />
      </ToolRow>

      <Workspace>
        <LeftPanel>
          <TabStrip>
            <Tab $w={56}>
              <svg width="58" height="17" viewBox="0 0 58 17">
                <path d="M0 16.500L6 .5h46l5 16z" fill="#8fb0ea" stroke="#5f83bb" />
              </svg>
              <span>大纲</span>
            </Tab>
            <Tab $w={60} $active>
              <svg width="62" height="18" viewBox="0 0 62 18">
                <path d="M0 18L7 .5h47l7 17.500z" fill="#fff" stroke="#4a6796" />
              </svg>
              <span>幻灯片</span>
            </Tab>
            <TabClose>×</TabClose>
          </TabStrip>
          <ThumbList>
            <ThumbRow>
              <ThumbNumber>1</ThumbNumber>
              <ThumbFrame $selected>
                <Thumb>测试1</Thumb>
              </ThumbFrame>
            </ThumbRow>
            <ThumbRow>
              <ThumbNumber>2</ThumbNumber>
              <ThumbFrame>
                <Thumb $bullet>•&nbsp;&nbsp;测试2</Thumb>
              </ThumbFrame>
            </ThumbRow>
          </ThumbList>
          <ViewBar>
            <ViewButtons>
              <ViewButton $active><Icon name="viewNormal" /></ViewButton>
              <ViewButton><Icon name="viewSorter" /></ViewButton>
              <ViewButton><Icon name="viewShow" /></ViewButton>
            </ViewButtons>
            <HScroll>
              <svg width="6" height="9" viewBox="0 0 6 9">
                <path d="M5 1L1.500 4.500 5 8" fill="none" stroke="#bbb" strokeWidth="1.500" />
              </svg>
              <svg width="6" height="9" viewBox="0 0 6 9">
                <path d="M1 1l3.500 3.500L1 8" fill="none" stroke="#bbb" strokeWidth="1.500" />
              </svg>
            </HScroll>
          </ViewBar>
        </LeftPanel>
        <Splitter />

        <CenterColumn>
          <TopRow>
            <Canvas>
              <Slide>
                <SlideTitle>测试1</SlideTitle>
                <SubtitleBox>单击此处添加副标题</SubtitleBox>
              </Slide>
            </Canvas>
            <VScroll>
              <ScrollBtn><Chevron up /></ScrollBtn>
              <ScrollThumb $h={300} />
              <ScrollFill />
              <ScrollBtn><Chevron /></ScrollBtn>
              <PageButtons>
                <DoubleChevron up />
                <DoubleChevron />
              </PageButtons>
            </VScroll>
          </TopRow>
          <Strip9 />
          <NotesRow>
            <Notes>单击此处添加备注</Notes>
            <NotesScroll>
              <ScrollBtn><Chevron up color="#bbb" /></ScrollBtn>
              <ScrollBtn><Chevron color="#bbb" /></ScrollBtn>
            </NotesScroll>
          </NotesRow>
        </CenterColumn>

        <TaskPane>
          <PaneHead>
            <DocGrip />
            <PaneTitle>幻灯片版式</PaneTitle>
            <PaneMenu />
            <CloseGlyph $w={22}>×</CloseGlyph>
          </PaneHead>
          <PaneNav>
            <NavItem><Icon name="navBack" /></NavItem>
            <NavItem><Icon name="navForward" /></NavItem>
            <NavItem><Icon name="navHome" /></NavItem>
          </PaneNav>
          <PaneLabel>应用幻灯片版式:</PaneLabel>
          <ListBox>
            <ListContent>
              {sections.map((sec) => (
                <div key={sec.title}>
                  <SectionHead>{sec.title}</SectionHead>
                  <LayoutGrid>
                    {sec.items.map((kind, i) => (
                      <LayoutThumb key={kind} kind={kind} selected={sec.title === "文字版式" && i === 0} />
                    ))}
                  </LayoutGrid>
                </div>
              ))}
            </ListContent>
            <VScroll>
              <ScrollBtn $h={18}><Chevron up /></ScrollBtn>
              <ScrollThumb $h={308} />
              <ScrollFill />
              <ScrollBtn $h={18}><Chevron /></ScrollBtn>
            </VScroll>
          </ListBox>
          <PaneFoot>
            <CheckBox>
              <svg width="11" height="11" viewBox="0 0 11 11">
                <path d="M2 5l3 3 4-6" fill="none" stroke="#222" strokeWidth="1.300" />
              </svg>
            </CheckBox>
            插入新幻灯片时显示
          </PaneFoot>
        </TaskPane>
      </Workspace>

      <DrawBar>
        <DrawStrip $w={631}>
          <DocGrip />
          <GripSlot $w={6} />
          <Btn $w={40}>绘图(<u>R</u>)</Btn>
          <ArrowBtn><Mini /></ArrowBtn>
          <GripSlot $w={5} />
          <Tool name="cursor" w={20} active />
          <Sep />
          <GripSlot $w={2} />
          <Btn $w={66}>自选图形(<u>U</u>)</Btn>
          <ArrowBtn><Mini /></ArrowBtn>
          <GripSlot $w={1} />
          <Tool name="line" />
          <Tool name="arrowLine" />
          <Tool name="rect" />
          <Tool name="ellipse" />
          <Tool name="textbox" />
          <Tool name="vtextbox" />
          <Tool name="wordart" />
          <Tool name="diagram" />
          <Tool name="clipart" />
          <Tool name="picture" />
          <Sep />
          <Tool name="fill" />
          <ArrowBtn><Mini /></ArrowBtn>
          <GripSlot $w={2} />
          <Tool name="lineColor" />
          <ArrowBtn><Mini /></ArrowBtn>
          <Tool name="fontColor" />
          <ArrowBtn><Mini /></ArrowBtn>
          <Tool name="lineStyle" />
          <Tool name="dash" />
          <Tool name="arrows" />
          <Tool name="shadow" />
          <Tool name="threeD" />
        </DrawStrip>
        <DrawOverflow $w={10} />
      </DrawBar>

      <Badge>38</Badge>
      <Watermark>
        <MarkTop>
          经验啦
          <svg width="25" height="25" viewBox="0 0 25 25">
            <path d="M2 13l4-1 3 5L21 1h3L10 24H7z" fill="#e8202a" />
          </svg>
        </MarkTop>
        <MarkBottom>jingyanla.com</MarkBottom>
      </Watermark>
    </Window>
  );
}
